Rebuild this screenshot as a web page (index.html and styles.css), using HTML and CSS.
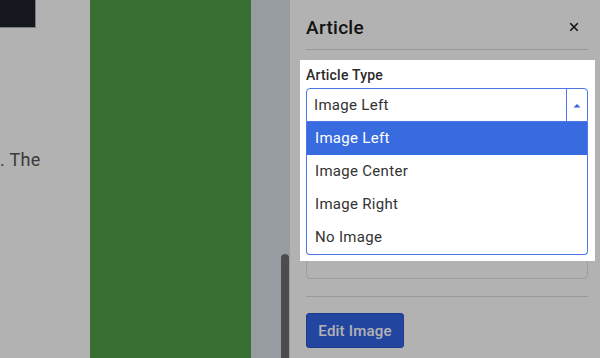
FILE: index.html
```html
<!DOCTYPE html>
<html>
<head>
  <meta charset="utf-8">
  <title>Article Settings</title>
  <link rel="stylesheet" href="styles.css">
</head>
<body>
  <div class="app">
    <div class="page">
      <div class="hero-img"></div>
      <p class="copy">. The</p>
    </div>
    <div class="green-col"></div>
    <div class="gutter"><div class="thumb"></div></div>

    <aside class="panel">
      <div class="panel-head">
        <h2>Article</h2>
        <button class="close" aria-label="Close">
          <svg width="10" height="10" viewBox="0 0 10 10"><path d="M1.8 1.8 L8.2 8.2 M8.2 1.8 L1.8 8.2" stroke="#1a1a1a" stroke-width="1.6" stroke-linecap="square"/></svg>
        </button>
      </div>

      <div class="field focus">
        <div class="spotlight"></div>
        <label class="field-label">Article Type</label>
        <div class="select">
          <span class="select-value">Image Left</span>
          <span class="select-toggle">
            <svg width="8" height="5" viewBox="0 0 8 5"><polygon points="0.5,4.5 4,1 7.5,4.5" fill="#2f63d9"/></svg>
          </span>
          <ul class="menu">
            <li class="active">Image Left</li>
            <li>Image Center</li>
            <li>Image Right</li>
            <li>No Image</li>
          </ul>
        </div>
      </div>

      <div class="image-box"></div>

      <hr class="divider">
      <button class="btn">Edit Image</button>
    </aside>
  </div>
</body>
</html>
```

FILE: styles.css
```css
body {
  margin: 0;
  width: 600px;
  height: 358px;
  overflow: hidden;
  font-family: Roboto, "Liberation Sans", sans-serif;
  background-color: #fff;
}

.app {
  display: grid;
  grid-template-columns: 90px 161px 39px 310px;
  height: 358px;
}

.hero-img {
  width: 35px;
  height: 27px;
  background-color: #1f222c;
  border-right: 1px solid #b0b0b0;
  border-bottom: 1px solid #b0b0b0;
}

.copy {
  margin: 119px 0 0;
  font-size: 18px;
  line-height: 26px;
  color: #555;
  letter-spacing: 0.3px;
  white-space: nowrap;
}

.green-col {
  background-color: #53a04a;
}

.gutter {
  background-color: #d9e0e6;
  display: flex;
  justify-content: flex-end;
  padding: 254px 1px 0 0;
}

.thumb {
  width: 8px;
  background-color: #6e6e71;
  border-radius: 4px 4px 0 0;
}

.panel {
  background-color: #fff;
  padding: 0 12px 0 16px;
}

.panel-head {
  box-sizing: border-box;
  height: 50px;
  padding-top: 5px;
  display: flex;
  justify-content: space-between;
  align-items: center;
  border-bottom: 1px solid #dcdcdc;
}

.panel-head h2 {
  margin: 0;
  font-size: 19px;
  font-weight: 500;
  letter-spacing: 0.3px;
  color: #1a1a1a;
}

.close {
  background: none;
  border: 0;
  padding: 0;
  margin-right: 9px;
  display: flex;
}

.field {
  position: relative;
  margin-top: 15px;
}

.spotlight {
  position: absolute;
  top: -5px;
  left: -6px;
  right: -7px;
  height: 201px;
  background-color: #fff;
  box-shadow: 0 0 0 1200px rgba(0, 0, 0, 0.3);
  z-index: 1;
}

.focus .field-label,
.focus .select {
  position: relative;
  z-index: 2;
}

.field-label {
  display: block;
  font-size: 14px;
  line-height: 20px;
  font-weight: 500;
  letter-spacing: 0.2px;
  color: #2a2a2a;
  margin-bottom: 3px;
}

.select {
  box-sizing: border-box;
  height: 34px;
  display: flex;
  border: 1px solid #4a78e6;
  border-radius: 4px 4px 0 0;
}

.select-value {
  flex: 1;
  padding-left: 7px;
  font-size: 15px;
  line-height: 32px;
  letter-spacing: 0.3px;
  color: #333;
}

.select-toggle {
  box-sizing: border-box;
  width: 21px;
  border-left: 1px solid #4a78e6;
  display: flex;
  align-items: center;
  justify-content: center;
}

.menu {
  position: absolute;
  top: calc(100% + 1px);
  left: -1px;
  right: -1px;
  margin: 0;
  padding: 0;
  list-style: none;
  background-color: #fff;
  border: 1px solid #4a78e6;
  border-top: 0;
  border-radius: 0 0 4px 4px;
}

.menu li {
  height: 33px;
  line-height: 33px;
  padding-left: 8px;
  font-size: 15px;
  letter-spacing: 0.3px;
  color: #333;
}

.menu li.active {
  background-color: #386be0;
  color: #fff;
}

.image-box {
  box-sizing: border-box;
  margin-top: 20px;
  height: 137px;
  border: 1px solid #e2e2e2;
  border-radius: 4px;
}

.divider {
  margin: 17px 0 0;
  height: 0;
  border: 0;
  border-top: 1px solid #dcdcdc;
}

.btn {
  display: block;
  margin-top: 16px;
  width: 98px;
  height: 35px;
  background-color: #3264e5;
  border: 1px solid #2a55c8;
  border-radius: 3px;
  color: #fff;
  font-family: Roboto, "Liberation Sans", sans-serif;
  font-size: 15px;
  font-weight: 500;
  letter-spacing: 0.2px;
  padding: 0;
}
```
